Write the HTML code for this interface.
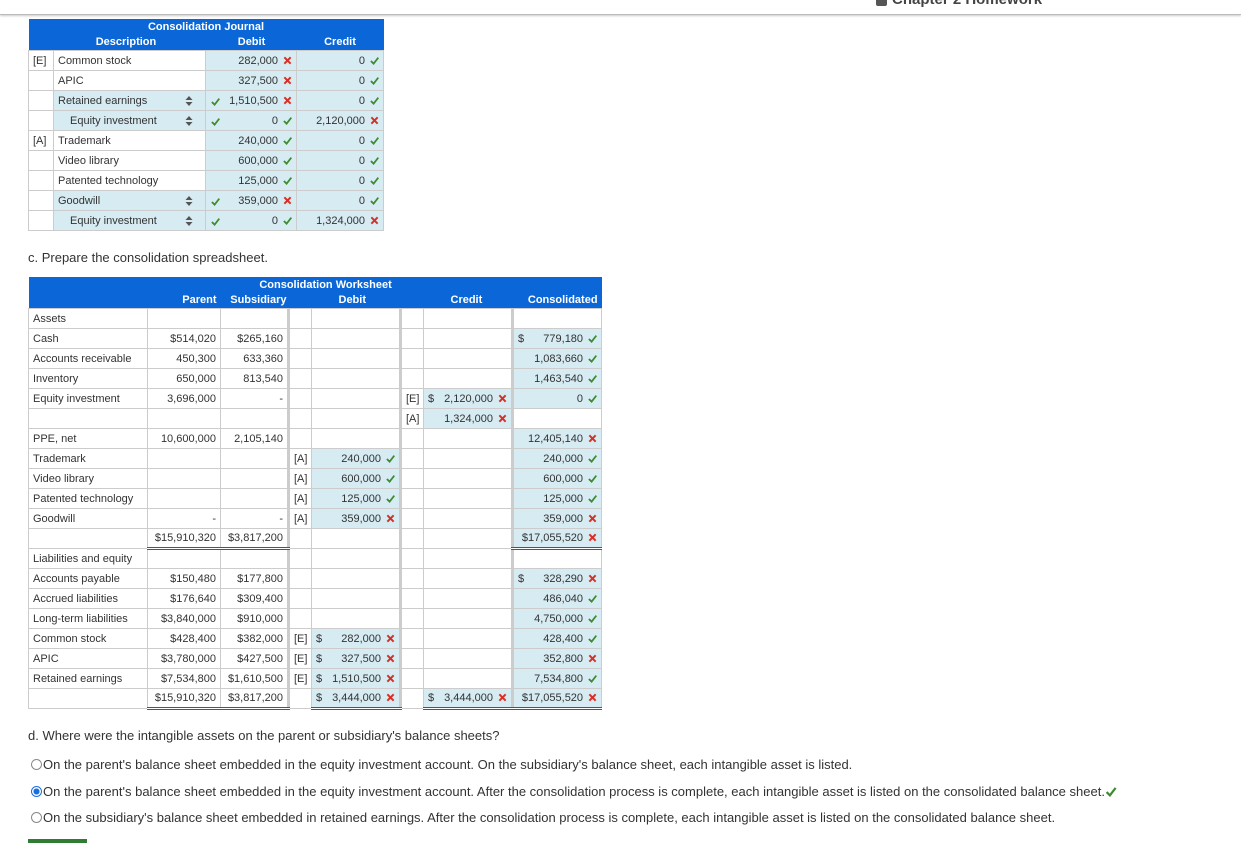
<!DOCTYPE html>
<html><head><meta charset="utf-8">
<style>
*{box-sizing:border-box;margin:0;padding:0}
body{width:1241px;height:843px;background:#fff;font-family:"Liberation Sans",sans-serif;color:#333;position:relative;overflow:hidden}
.topbar{position:absolute;left:0;top:0;width:1241px;height:15px;border-bottom:1px solid #bbb;box-shadow:0 1px 2px #ccc}
.chap{position:absolute;left:876px;top:-9px;font-size:15px;font-weight:bold;color:#444}
.chap i{display:inline-block;width:11px;height:11px;background:#555;border-radius:2px;margin-right:5px;vertical-align:middle}
table{border-collapse:collapse;table-layout:fixed;position:absolute;font-size:11px}
td{border:1px solid #ccc;height:20px;padding:0 4px;white-space:nowrap;overflow:hidden;line-height:18px}
th{background:#0b67d7;color:#fff;font-weight:bold;font-size:11px;height:15px;line-height:15px;border:none;padding:0 4px;white-space:nowrap}
.r{text-align:right}
.b{background:#d6ebf2}
.ok,.no{display:inline-block;width:9px;height:9px;margin-left:5px;vertical-align:-1px}
svg{display:block}
.tk{border-right:3px solid #ccc}
.tt{border-top:1px solid #333}
.db{border-bottom:3px double #555}
.srt{float:right;margin-right:8px}
p{position:absolute;left:28px;font-size:13px;color:#333}
.rad{display:inline-block;width:11px;height:11px;border:1px solid #888;border-radius:50%;vertical-align:-1px;margin-right:1px;background:#fff}
.rad.on{border-color:#1a6fe0;background:radial-gradient(circle,#1a6fe0 45%,#fff 50%)}
</style></head><body>
<div class="topbar"></div>
<div class="chap"><i></i>Chapter 2 Homework</div>

<svg width="0" height="0" style="position:absolute">
<defs>
<symbol id="c" viewBox="0 0 10 10"><path d="M1 5.5 L4 8.5 L9.2 1.8" stroke="#3d8b2f" stroke-width="2" fill="none"/></symbol>
<symbol id="x" viewBox="0 0 10 10"><path d="M1.5 1.5 L8.5 8.5 M8.5 1.5 L1.5 8.5" stroke="#d93025" stroke-width="2.2" fill="none"/></symbol>
<symbol id="s" viewBox="0 0 8 10"><path d="M4 0 L7.5 4 H0.5Z M4 10 L7.5 6 H0.5Z" fill="#555"/></symbol>
</defs></svg>

<!-- Journal -->
<table style="left:28px;top:19px;width:355px">
<colgroup><col style="width:25px"><col style="width:152px"><col style="width:91px"><col style="width:87px"></colgroup>
<tr><th colspan="4" style="text-align:center;padding-top:1px">Consolidation Journal</th></tr>
<tr><th colspan="2" style="text-align:center;padding-left:22px">Description</th><th style="text-align:center;padding-left:5px">Debit</th><th style="text-align:center">Credit</th></tr>
<tr><td>[E]</td><td>Common stock</td><td class="r b">282,000<svg class="no" style="display:inline-block"><use href="#x"/></svg></td><td class="r b">0<svg class="ok" style="display:inline-block"><use href="#c"/></svg></td></tr>
<tr><td></td><td>APIC</td><td class="r b">327,500<svg class="no" style="display:inline-block"><use href="#x"/></svg></td><td class="r b">0<svg class="ok" style="display:inline-block"><use href="#c"/></svg></td></tr>
<tr><td></td><td class="b">Retained earnings<svg class="srt" width="8" height="10" style="display:inline-block;margin-top:4px"><use href="#s"/></svg></td><td class="r b"><svg class="ok" style="display:inline-block;float:left;margin:5px 0 0 1px"><use href="#c"/></svg>1,510,500<svg class="no" style="display:inline-block"><use href="#x"/></svg></td><td class="r b">0<svg class="ok" style="display:inline-block"><use href="#c"/></svg></td></tr>
<tr><td></td><td class="b" style="padding-left:16px">Equity investment<svg class="srt" width="8" height="10" style="display:inline-block;margin-top:4px"><use href="#s"/></svg></td><td class="r b"><svg class="ok" style="display:inline-block;float:left;margin:5px 0 0 1px"><use href="#c"/></svg>0<svg class="ok" style="display:inline-block"><use href="#c"/></svg></td><td class="r b">2,120,000<svg class="no" style="display:inline-block"><use href="#x"/></svg></td></tr>
<tr><td>[A]</td><td>Trademark</td><td class="r b">240,000<svg class="ok" style="display:inline-block"><use href="#c"/></svg></td><td class="r b">0<svg class="ok" style="display:inline-block"><use href="#c"/></svg></td></tr>
<tr><td></td><td>Video library</td><td class="r b">600,000<svg class="ok" style="display:inline-block"><use href="#c"/></svg></td><td class="r b">0<svg class="ok" style="display:inline-block"><use href="#c"/></svg></td></tr>
<tr><td></td><td>Patented technology</td><td class="r b">125,000<svg class="ok" style="display:inline-block"><use href="#c"/></svg></td><td class="r b">0<svg class="ok" style="display:inline-block"><use href="#c"/></svg></td></tr>
<tr><td></td><td class="b">Goodwill<svg class="srt" width="8" height="10" style="display:inline-block;margin-top:4px"><use href="#s"/></svg></td><td class="r b"><svg class="ok" style="display:inline-block;float:left;margin:5px 0 0 1px"><use href="#c"/></svg>359,000<svg class="no" style="display:inline-block"><use href="#x"/></svg></td><td class="r b">0<svg class="ok" style="display:inline-block"><use href="#c"/></svg></td></tr>
<tr><td></td><td class="b" style="padding-left:16px">Equity investment<svg class="srt" width="8" height="10" style="display:inline-block;margin-top:4px"><use href="#s"/></svg></td><td class="r b"><svg class="ok" style="display:inline-block;float:left;margin:5px 0 0 1px"><use href="#c"/></svg>0<svg class="ok" style="display:inline-block"><use href="#c"/></svg></td><td class="r b">1,324,000<svg class="no" style="display:inline-block"><use href="#x"/></svg></td></tr>
</table>

<p style="top:250px">c. Prepare the consolidation spreadsheet.</p>

<!-- Worksheet -->
<table style="left:28px;top:277px;width:573px">
<colgroup><col style="width:119px"><col style="width:73px"><col style="width:68px"><col style="width:23px"><col style="width:89px"><col style="width:23px"><col style="width:89px"><col style="width:89px"></colgroup>
<tr><th colspan="8" style="text-align:center;padding-top:1px;padding-left:25px">Consolidation Worksheet</th></tr>
<tr><th></th><th class="r">Parent</th><th class="r" style="padding-right:2px">Subsidiary</th><th></th><th style="text-align:left;padding-left:27px">Debit</th><th></th><th style="text-align:left;padding-left:27px">Credit</th><th class="r">Consolidated</th></tr>
<tr><td>Assets</td><td></td><td class="tk"></td><td></td><td class="tk"></td><td></td><td class="tk"></td><td></td></tr>
<tr><td>Cash</td><td class="r">$514,020</td><td class="r tk">$265,160</td><td></td><td class="tk"></td><td></td><td class="tk"></td><td class="r b"><span style="float:left">$</span>779,180<svg class="ok" style="display:inline-block"><use href="#c"/></svg></td></tr>
<tr><td>Accounts receivable</td><td class="r">450,300</td><td class="r tk">633,360</td><td></td><td class="tk"></td><td></td><td class="tk"></td><td class="r b">1,083,660<svg class="ok" style="display:inline-block"><use href="#c"/></svg></td></tr>
<tr><td>Inventory</td><td class="r">650,000</td><td class="r tk">813,540</td><td></td><td class="tk"></td><td></td><td class="tk"></td><td class="r b">1,463,540<svg class="ok" style="display:inline-block"><use href="#c"/></svg></td></tr>
<tr><td>Equity investment</td><td class="r">3,696,000</td><td class="r tk">-</td><td></td><td class="tk"></td><td>[E]</td><td class="r b tk"><span style="float:left">$</span>2,120,000<svg class="no" style="display:inline-block"><use href="#x"/></svg></td><td class="r b">0<svg class="ok" style="display:inline-block"><use href="#c"/></svg></td></tr>
<tr><td></td><td></td><td class="tk"></td><td></td><td class="tk"></td><td>[A]</td><td class="r b tk">1,324,000<svg class="no" style="display:inline-block"><use href="#x"/></svg></td><td></td></tr>
<tr><td>PPE, net</td><td class="r">10,600,000</td><td class="r tk">2,105,140</td><td></td><td class="tk"></td><td></td><td class="tk"></td><td class="r b">12,405,140<svg class="no" style="display:inline-block"><use href="#x"/></svg></td></tr>
<tr><td>Trademark</td><td></td><td class="tk"></td><td>[A]</td><td class="r b tk">240,000<svg class="ok" style="display:inline-block"><use href="#c"/></svg></td><td></td><td class="tk"></td><td class="r b">240,000<svg class="ok" style="display:inline-block"><use href="#c"/></svg></td></tr>
<tr><td>Video library</td><td></td><td class="tk"></td><td>[A]</td><td class="r b tk">600,000<svg class="ok" style="display:inline-block"><use href="#c"/></svg></td><td></td><td class="tk"></td><td class="r b">600,000<svg class="ok" style="display:inline-block"><use href="#c"/></svg></td></tr>
<tr><td>Patented technology</td><td></td><td class="tk"></td><td>[A]</td><td class="r b tk">125,000<svg class="ok" style="display:inline-block"><use href="#c"/></svg></td><td></td><td class="tk"></td><td class="r b">125,000<svg class="ok" style="display:inline-block"><use href="#c"/></svg></td></tr>
<tr><td>Goodwill</td><td class="r">-</td><td class="r tk">-</td><td>[A]</td><td class="r b tk">359,000<svg class="no" style="display:inline-block"><use href="#x"/></svg></td><td></td><td class="tk"></td><td class="r b">359,000<svg class="no" style="display:inline-block"><use href="#x"/></svg></td></tr>
<tr><td></td><td class="r tt db">$15,910,320</td><td class="r tk tt db">$3,817,200</td><td></td><td class="tk"></td><td></td><td class="tk"></td><td class="r b tt db">$17,055,520<svg class="no" style="display:inline-block"><use href="#x"/></svg></td></tr>
<tr><td>Liabilities and equity</td><td></td><td class="tk"></td><td></td><td class="tk"></td><td></td><td class="tk"></td><td></td></tr>
<tr><td>Accounts payable</td><td class="r">$150,480</td><td class="r tk">$177,800</td><td></td><td class="tk"></td><td></td><td class="tk"></td><td class="r b"><span style="float:left">$</span>328,290<svg class="no" style="display:inline-block"><use href="#x"/></svg></td></tr>
<tr><td>Accrued liabilities</td><td class="r">$176,640</td><td class="r tk">$309,400</td><td></td><td class="tk"></td><td></td><td class="tk"></td><td class="r b">486,040<svg class="ok" style="display:inline-block"><use href="#c"/></svg></td></tr>
<tr><td>Long-term liabilities</td><td class="r">$3,840,000</td><td class="r tk">$910,000</td><td></td><td class="tk"></td><td></td><td class="tk"></td><td class="r b">4,750,000<svg class="ok" style="display:inline-block"><use href="#c"/></svg></td></tr>
<tr><td>Common stock</td><td class="r">$428,400</td><td class="r tk">$382,000</td><td>[E]</td><td class="r b tk"><span style="float:left">$</span>282,000<svg class="no" style="display:inline-block"><use href="#x"/></svg></td><td></td><td class="tk"></td><td class="r b">428,400<svg class="ok" style="display:inline-block"><use href="#c"/></svg></td></tr>
<tr><td>APIC</td><td class="r">$3,780,000</td><td class="r tk">$427,500</td><td>[E]</td><td class="r b tk"><span style="float:left">$</span>327,500<svg class="no" style="display:inline-block"><use href="#x"/></svg></td><td></td><td class="tk"></td><td class="r b">352,800<svg class="no" style="display:inline-block"><use href="#x"/></svg></td></tr>
<tr><td>Retained earnings</td><td class="r">$7,534,800</td><td class="r tk">$1,610,500</td><td>[E]</td><td class="r b tk"><span style="float:left">$</span>1,510,500<svg class="no" style="display:inline-block"><use href="#x"/></svg></td><td></td><td class="tk"></td><td class="r b">7,534,800<svg class="ok" style="display:inline-block"><use href="#c"/></svg></td></tr>
<tr><td></td><td class="r tt db">$15,910,320</td><td class="r tk tt db">$3,817,200</td><td></td><td class="r b tk tt db"><span style="float:left">$</span>3,444,000<svg class="no" style="display:inline-block"><use href="#x"/></svg></td><td></td><td class="r b tk tt db"><span style="float:left">$</span>3,444,000<svg class="no" style="display:inline-block"><use href="#x"/></svg></td><td class="r b tt db">$17,055,520<svg class="no" style="display:inline-block"><use href="#x"/></svg></td></tr>
</table>

<p style="top:728px">d. Where were the intangible assets on the parent or subsidiary's balance sheets?</p>
<p style="top:757px;left:31px"><span class="rad"></span>On the parent's balance sheet embedded in the equity investment account. On the subsidiary's balance sheet, each intangible asset is listed.</p>
<p style="top:784px;left:31px"><span class="rad on"></span>On the parent's balance sheet embedded in the equity investment account. After the consolidation process is complete, each intangible asset is listed on the consolidated balance sheet.<svg width="12" height="11" style="display:inline-block;vertical-align:-1px"><use href="#c"/></svg></p>
<p style="top:810px;left:31px"><span class="rad"></span>On the subsidiary's balance sheet embedded in retained earnings. After the consolidation process is complete, each intangible asset is listed on the consolidated balance sheet.</p>
<div style="position:absolute;left:28px;top:839px;width:59px;height:4px;background:#2e7d32"></div>
</body></html>
